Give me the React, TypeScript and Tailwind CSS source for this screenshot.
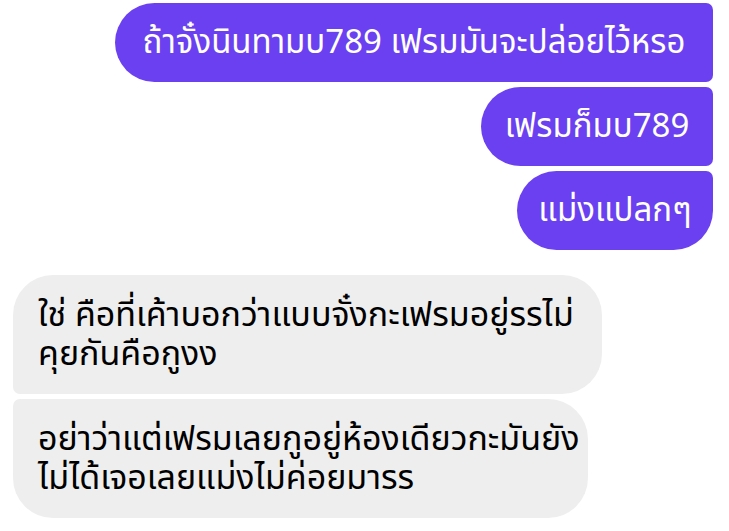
const sent = [
  { text: "ถ้าจั๋งนินทามบ789 เฟรมมันจะปล่อยไว้หรอ", w: "w-[598px]", r: "rounded-l-[40px] rounded-r-[7px]" },
  { text: "เฟรมก็มบ789", w: "w-[232px]", r: "rounded-l-[40px] rounded-r-[7px]" },
  { text: "แม่งแปลกๆ", w: "w-[196px]", r: "rounded-l-[40px] rounded-tr-[7px] rounded-br-[40px]" },
];

const received = [
  {
    lines: ["ใช่ คือที่เค้าบอกว่าแบบจั๋งกะเฟรมอยู่รรไม่", "คุยกันคือกูงง"],
    w: "w-[589px]",
    r: "rounded-tl-[40px] rounded-bl-[7px] rounded-r-[40px]",
  },
  {
    lines: ["อย่าว่าแต่เฟรมเลยกูอยู่ห้องเดียวกะมันยัง", "ไม่ได้เจอเลยแม่งไม่ค่อยมารร"],
    w: "w-[575px]",
    r: "rounded-tl-[7px] rounded-bl-[40px] rounded-r-[40px]",
  },
];

export default function App() {
  return (
    <div
      className="w-[729px] h-[531px] bg-white overflow-hidden pt-[3px]"
      style={{ fontFamily: '"Noto Sans Thai", "Noto Sans", "DejaVu Sans", sans-serif' }}
    >
      <div className="flex flex-col items-end gap-[5px] pr-4">
        {sent.map((m, i) => (
          <div
            key={i}
            className={`${m.w} ${m.r} h-[79px] bg-[#6a40f1] text-white text-[33px] leading-[38px] flex items-center justify-center whitespace-nowrap`}
          >
            {m.text}
          </div>
        ))}
      </div>
      <div className="flex flex-col items-start gap-[5px] pl-[13px] mt-[25px]">
        {received.map((m, i) => (
          <div
            key={i}
            className={`${m.w} ${m.r} h-[119px] bg-[#eeeeee] text-black text-[34px] leading-[39px] px-[25px] flex flex-col justify-center whitespace-nowrap`}
          >
            {m.lines.map((l, j) => (
              <span key={j}>{l}</span>
            ))}
          </div>
        ))}
      </div>
    </div>
  );
}
